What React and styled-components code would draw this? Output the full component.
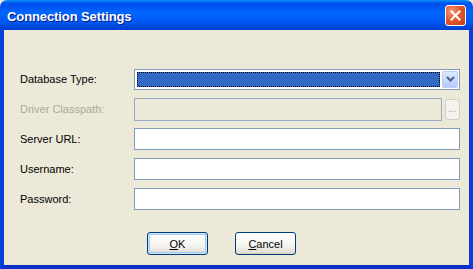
import React from "react";
import styled, { createGlobalStyle } from "styled-components";

const GlobalStyle = createGlobalStyle`
  html, body {
    margin: 0;
    padding: 0;
    width: 473px;
    height: 269px;
    overflow: hidden;
    background: #ece9d8;
  }
  #root {
    width: 473px;
    height: 269px;
  }
`;

const Window = styled.div`
  width: 473px;
  height: 269px;
  display: flex;
  flex-direction: column;
  font-family: "Liberation Sans", Arial, sans-serif;
  font-size: 11px;
  color: #000;
  box-sizing: border-box;
`;

const TitleBar = styled.div`
  height: 30px;
  flex: none;
  display: flex;
  align-items: center;
  justify-content: space-between;
  padding: 0 7px 0 7px;
  border-radius: 7px 7px 0 0;
  background: linear-gradient(
    to bottom,
    #0997ff 0px,
    #0053ee 3px,
    #0050ee 6px,
    #0066ff 12px,
    #0058f6 22px,
    #0047d8 27px,
    #003dd7 30px
  );
  box-sizing: border-box;
`;

const Title = styled.span`
  color: #fff;
  font-weight: bold;
  font-size: 13px;
  letter-spacing: -0.1px;
  text-shadow: 1px 1px 0 #0a1883;
  margin-top: 2px;
`;

const CloseButton = styled.div`
  width: 21px;
  height: 21px;
  box-sizing: border-box;
  border: 1px solid #fff;
  border-radius: 3px;
  background: radial-gradient(circle at 30% 30%, #f39a7c 0%, #e2572f 45%, #c23e19 100%);
  display: flex;
  align-items: center;
  justify-content: center;
  margin-top: 1px;
`;

const Body = styled.div`
  flex: 1;
  display: flex;
  flex-direction: column;
  background: #ece9d8;
  border-left: 4px solid #0841d9;
  border-right: 4px solid #0841d9;
  border-bottom: 4px solid #0831c9;
  padding: 34px 9px 0 16px;
  box-sizing: border-box;
`;

const Form = styled.div`
  display: grid;
  grid-template-columns: 114px 1fr;
  grid-auto-rows: 30px;
  align-items: center;
`;

const Label = styled.span`
  color: ${(p) => (p.disabled ? "#aca899" : "#000")};
`;

const Combo = styled.div`
  height: 21px;
  box-sizing: border-box;
  border: 1px solid #7f9db9;
  background: #fff;
  display: flex;
  align-items: center;
  padding: 2px 1px 2px 2px;
  gap: 2px;
`;

const Selection = styled.div`
  flex: 1;
  height: 15px;
  background: #316ac5;
  outline: 1px dotted #000;
  outline-offset: -1px;
  border: 1px dotted #f0c080;
  box-sizing: border-box;
`;

const DropButton = styled.div`
  width: 16px;
  height: 17px;
  box-sizing: border-box;
  border-radius: 2px;
  border: 1px solid #b9cdf7;
  background: linear-gradient(to bottom, #dde8fe, #b6cbf9);
  display: flex;
  align-items: center;
  justify-content: center;
`;

const FieldRow = styled.div`
  display: flex;
  align-items: center;
  gap: 3px;
`;

const TextField = styled.div`
  flex: 1;
  height: ${(p) => (p.disabled ? "23px" : "22px")};
  box-sizing: border-box;
  border: 1px solid ${(p) => (p.disabled ? "#94a8c3" : "#7f9db9")};
  background: ${(p) => (p.disabled ? "#ece9d8" : "#fff")};
`;

const SmallButton = styled.div`
  width: 15px;
  height: 21px;
  box-sizing: border-box;
  border: 1px solid #d2cfbf;
  border-radius: 3px;
  background: #f4f3ee;
  color: #aca899;
  font-size: 10px;
  display: flex;
  align-items: flex-end;
  justify-content: center;
  padding-bottom: 5px;
  line-height: 1;
`;

const ButtonRow = styled.div`
  display: flex;
  gap: 27px;
  margin-top: 18px;
  padding-left: 127px;
`;

const Button = styled.div`
  width: ${(p) => p.$w}px;
  height: 23px;
  box-sizing: border-box;
  border: 1px solid #003c74;
  border-radius: 3px;
  background: linear-gradient(to bottom, #ffffff 0%, #f5f4ef 60%, #e3e0d6 90%, #d6d0c5 100%);
  box-shadow: ${(p) =>
    p.$default
      ? "inset 0 0 0 1px #cee7ff, inset 0 0 0 2px #a6c8f5"
      : "none"};
  display: flex;
  align-items: center;
  justify-content: center;
  font-size: 11px;
  padding-top: 1px;

  u {
    text-decoration: underline;
  }
`;

const App = () => {
  return (
    <>
      <GlobalStyle />
      <Window>
        <TitleBar>
          <Title>Connection Settings</Title>
          <CloseButton>
            <svg width="11" height="11" viewBox="0 0 11 11">
              <path d="M1.5 1.5 L9.5 9.5 M9.5 1.5 L1.5 9.5" stroke="#fff" strokeWidth="2" strokeLinecap="square" />
            </svg>
          </CloseButton>
        </TitleBar>
        <Body>
          <Form>
            <Label>Database Type:</Label>
            <Combo>
              <Selection />
              <DropButton>
                <svg width="9" height="6" viewBox="0 0 9 6">
                  <path d="M1 1 L4.5 4.5 L8 1" stroke="#4d6185" strokeWidth="2" fill="none" />
                </svg>
              </DropButton>
            </Combo>

            <Label disabled>Driver Classpath:</Label>
            <FieldRow>
              <TextField disabled />
              <SmallButton>...</SmallButton>
            </FieldRow>

            <Label>Server URL:</Label>
            <TextField />

            <Label>Username:</Label>
            <TextField />

            <Label>Password:</Label>
            <TextField />
          </Form>
          <ButtonRow>
            <Button $w={61} $default>
              <span><u>O</u>K</span>
            </Button>
            <Button $w={61}>
              <span><u>C</u>ancel</span>
            </Button>
          </ButtonRow>
        </Body>
      </Window>
    </>
  );
};

export default App;
